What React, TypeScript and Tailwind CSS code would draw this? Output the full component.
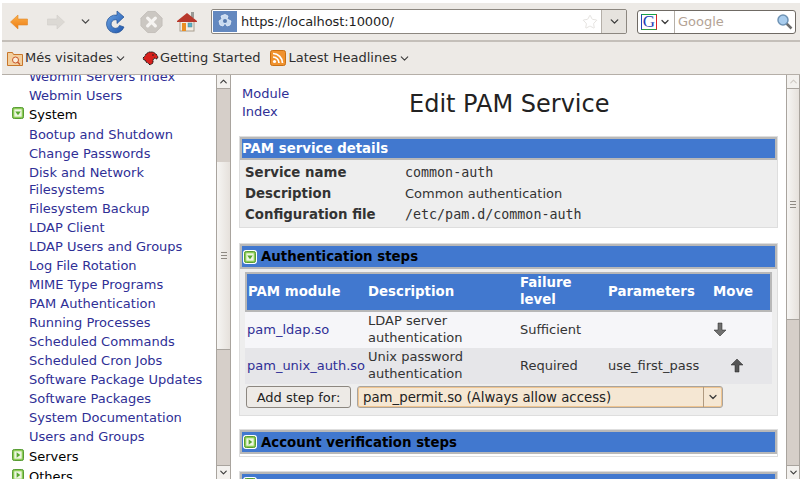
import { ChevronDown, ChevronUp, Star } from "lucide-react";

const systemLinks = [
  "Bootup and Shutdown",
  "Change Passwords",
  "Disk and Network Filesystems",
  "Filesystem Backup",
  "LDAP Client",
  "LDAP Users and Groups",
  "Log File Rotation",
  "MIME Type Programs",
  "PAM Authentication",
  "Running Processes",
  "Scheduled Commands",
  "Scheduled Cron Jobs",
  "Software Package Updates",
  "Software Packages",
  "System Documentation",
  "Users and Groups",
];

function GreenBox({ open, size = 12 }: { open?: boolean; size?: number }) {
  return (
    <svg width={size} height={size} viewBox="0 0 13 13" className="shrink-0">
      <rect x="0.5" y="0.5" width="12" height="12" rx="2" fill="#8ccb55" stroke="#4a9426" />
      <rect x="2.5" y="2.5" width="8" height="8" fill="#eef6e2" />
      {open ? <path d="M3.500 5h6l-3 4z" fill="#58a82e" /> : <path d="M5 3.500v6l4-3z" fill="#58a82e" />}
    </svg>
  );
}

function MenuHead({ label, open }: { label: string; open?: boolean }) {
  return (
    <div className="relative h-[20px] leading-[20px] text-black">
      <span className="absolute top-[2px] left-[-17px]">
        <GreenBox open={open} />
      </span>
      {label}
    </div>
  );
}

function Section({ title, open, headHeight, children }: { title: string; open?: boolean; headHeight: string; children?: React.ReactNode }) {
  return (
    <div className="border border-[#dedede]">
      <div className={`flex items-center gap-[4px] border-2 border-[#b8b8b8] bg-[#4178cf] pl-px ${headHeight}`}>
        <span className="flex rounded-[3px] bg-white p-px">
          <GreenBox open={open} size={12} />
        </span>
        <span className="pt-px text-[13.33px] font-bold text-black">{title}</span>
      </div>
      {children}
    </div>
  );
}

function ThumbGrip() {
  return (
    <div className="flex h-full flex-col items-center justify-center gap-[2px]">
      <span className="h-px w-[6px] bg-[#8f8a84]" />
      <span className="h-px w-[6px] bg-[#8f8a84]" />
      <span className="h-px w-[6px] bg-[#8f8a84]" />
    </div>
  );
}

function Scrollbar({ thumbTop, thumbHeight, width, upDisabled }: { thumbTop: number; thumbHeight: number; width: string; upDisabled?: boolean }) {
  return (
    <div className={`flex shrink-0 flex-col border-x border-[#a9a49e] bg-[#d6cfc9] ${width}`}>
      <div className="flex h-[14px] items-center justify-center border-b border-[#a9a49e] bg-[#f3f1ee]">
        <ChevronUp size={11} strokeWidth={2.5} className={upDisabled ? "text-[#cfcac4]" : "text-[#3c3c3c]"} />
      </div>
      <div className="min-h-0 flex-1">
        <div style={{ height: thumbTop }} />
        <div style={{ height: thumbHeight }} className="border-b border-[#a9a49e] bg-gradient-to-r from-[#f6f5f3] to-[#e6e1dc]">
          <ThumbGrip />
        </div>
      </div>
      <div className="flex h-[14px] items-center justify-center border-t border-[#a9a49e] bg-[#f3f1ee]">
        <ChevronDown size={11} strokeWidth={2.5} className="text-[#3c3c3c]" />
      </div>
    </div>
  );
}

const rowGrid = "grid h-[36px] grid-cols-[121px_152px_88px_105px_1fr] items-center pb-[2px] pl-[2px] leading-[17px]";

export default function App() {
  return (
    <div className="h-[479px] w-[802px] overflow-hidden bg-white pt-[3px] pr-[2px] pl-[2px] font-['DejaVu_Sans',sans-serif] text-[13px] text-[#333333]">
      {/* browser toolbar */}
      <div className="flex h-[39px] items-center border-b-2 border-[#c4bfb9] bg-[#edeae6] pl-[8px]">
        <svg width="18" height="16" viewBox="0 0 18 16">
          <defs>
            <linearGradient id="backFill" x1="0" y1="0" x2="0" y2="1">
              <stop offset="0" stopColor="#fbb04a" />
              <stop offset="1" stopColor="#ee7d14" />
            </linearGradient>
          </defs>
          <path d="M0.500 8 8 1v4h9.500v6H8v4z" fill="url(#backFill)" stroke="#e08a2c" strokeWidth="0.600" />
        </svg>
        <svg width="18" height="16" viewBox="0 0 18 16" className="ml-[19px]">
          <path d="M17.500 8 10 1v4H0.500v6H10v4z" fill="#dcd9d4" stroke="#d2cec9" strokeWidth="0.600" />
        </svg>
        <ChevronDown size={13} strokeWidth={2.5} className="ml-[14px] text-[#4a4a4a]" />
        <svg width="20" height="24" viewBox="0 0 20 24" className="ml-[13px]">
          <defs>
            <linearGradient id="reloadFill" x1="0" y1="0" x2="1" y2="1">
              <stop offset="0" stopColor="#6fa6e4" />
              <stop offset="1" stopColor="#1f57ae" />
            </linearGradient>
          </defs>
          <path d="M12 1v4.100A9 9 0 1 0 19 17l-4.500-1.600A4.300 4.300 0 1 1 12 10v3.500L19 7z" fill="url(#reloadFill)" stroke="#1f4f94" strokeWidth="0.700" />
        </svg>
        <svg width="23" height="24" viewBox="0 0 24 24" className="ml-[15px]">
          <path d="M8 1h8l7 7v8l-7 7H8l-7-7V8z" fill="#cbc7c2" stroke="#c3bfba" strokeLinejoin="round" />
          <path d="m8 8 8 8M16 8l-8 8" stroke="#f6f4f2" strokeWidth="3.400" strokeLinecap="round" />
        </svg>
        <svg width="20" height="21" viewBox="0 0 20 21" className="ml-[14px]">
          <rect x="14" y="1" width="3" height="6" fill="#9a9a96" />
          <rect x="3" y="9" width="14" height="11" fill="#f3eee4" stroke="#a89e90" />
          <path d="M0 10 10 2l10 8v1H0z" fill="#b8382b" />
          <rect x="5" y="12" width="4" height="8" fill="#ea8f24" />
          <rect x="11" y="12" width="4" height="4" fill="#55b3c9" stroke="#5d7f8a" strokeWidth="0.500" />
        </svg>
        <div className="ml-[14px] flex h-[25px] w-[416px] items-stretch rounded-[2px] border border-[#8c8780] bg-white">
          <div className="my-px ml-px flex w-[24px] items-center justify-center bg-[#6388bf]">
            <svg width="16" height="17" viewBox="0 0 16 17">
              <path d="M8 1.500 11 3l-1 3 4 2-1 4-3 1-2-3-2 3-3-1-1-4 3-2-1-3z" fill="#c9dbf0" stroke="#e8f0f9" strokeWidth="0.800" />
              <circle cx="8" cy="8" r="2" fill="#5679ad" />
            </svg>
          </div>
          <span className="ml-[4px] self-center text-[13px] tracking-[-0.1px] text-[#1f1f1f]">https://localhost:10000/</span>
          <Star size={16} strokeWidth={1} className="mr-[3px] ml-auto self-center text-[#d8d5d0]" />
          <div className="flex w-[25px] items-center justify-center rounded-r-[2px] border-l border-[#b5b0a9] bg-[#e6e3de]">
            <ChevronDown size={13} strokeWidth={2.5} className="text-[#3c3c3c]" />
          </div>
        </div>
        <div className="ml-[10px] flex h-[24px] w-[159px] items-center rounded-[3px] border border-[#6f6a64] bg-white">
          <span className="ml-[3px] flex h-[16px] w-[16px] items-center justify-center border border-t-[#19a34a] border-r-[#d8232a] border-b-[#2f9b3f] border-l-[#2244b8] font-['Liberation_Serif',serif] text-[17px] leading-none text-[#1f3fb8]">
            G
          </span>
          <ChevronDown size={12} strokeWidth={2.5} className="ml-[2px] text-[#3c3c3c]" />
          <span className="ml-[3px] h-full border-l border-[#b5b0a9]" />
          <span className="ml-[3px] text-[13px] text-[#b3a395]">Google</span>
          <svg width="17" height="17" viewBox="0 0 17 17" className="mr-[2px] ml-auto">
            <path d="m10.500 10.500 5 5" stroke="#6e6e6e" strokeWidth="2.500" />
            <circle cx="7" cy="7" r="5" fill="#a9cdee" stroke="#6f93b5" strokeWidth="1.500" />
          </svg>
        </div>
      </div>

      {/* bookmarks */}
      <div className="flex h-[33px] items-center border-b border-[#b5afa8] bg-[#edeae6] pl-[5px] text-[13px] text-[#2e2e2e]">
        <svg width="16" height="16" viewBox="0 0 16 16">
          <path d="M0.500 15.500v-13h5l1 2h9v11z" fill="#f3cf9e" stroke="#c8762a" />
          <circle cx="8.500" cy="10" r="3" fill="#fbeedb" stroke="#c8562a" />
          <path d="m10.500 12 2.500 2.500" stroke="#c8562a" strokeWidth="1.200" />
        </svg>
        <span className="ml-[2px]">Més visitades</span>
        <ChevronDown size={13} strokeWidth={2} className="ml-[1px] text-[#3c3c3c]" />
        <svg width="17" height="15" viewBox="0 0 17 15" className="ml-[15px]">
          <path d="M1 7 3 5l1-2 3-2h4l3 2 2 3-1 2-3-1-1 2v3l-3 2-2-2-2-1-1-2H2z" fill="#d8201c" stroke="#1a1a1a" strokeWidth="1" strokeDasharray="1.500 0.500" />
          <circle cx="11" cy="4" r="0.800" fill="#1a1a1a" />
        </svg>
        <span className="ml-[1px]">Getting Started</span>
        <svg width="16" height="16" viewBox="0 0 16 16" className="ml-[10px]">
          <rect x="0.500" y="0.500" width="15" height="15" rx="2" fill="#f0922e" stroke="#c96f12" />
          <circle cx="4.500" cy="11.500" r="1.600" fill="#fff" />
          <path d="M3 7a6 6 0 0 1 6 6M3 3.500a9.500 9.500 0 0 1 9.500 9.500" fill="none" stroke="#fff" strokeWidth="1.700" />
        </svg>
        <span className="ml-[2px]">Latest Headlines</span>
        <ChevronDown size={13} strokeWidth={2} className="ml-[1px] text-[#3c3c3c]" />
      </div>

      <div className="flex h-[404px] overflow-hidden">
        {/* left menu */}
        <div className="h-full w-[214px] shrink-0 overflow-hidden">
          <div className="mt-[-8px] w-[208px] pl-[27px] leading-[17px] text-[#2f2f96]">
            <div className="py-px">Webmin Servers Index</div>
            <div className="py-px">Webmin Users</div>
            <MenuHead label="System" open />
            {systemLinks.map((link) => (
              <div key={link} className="py-px">
                {link}
              </div>
            ))}
            <div className="mt-px">
              <MenuHead label="Servers" />
              <MenuHead label="Others" />
            </div>
          </div>
        </div>
        <Scrollbar thumbTop={73} thumbHeight={188} width="w-[15px]" />

        {/* main page */}
        <div className="min-w-0 flex-1 overflow-hidden px-[8px]">
          <div className="flex h-[61px] items-start pt-[10px] pl-[3px]">
            <div className="w-[60px] leading-[18px] text-[#2f2f96]">
              Module
              <br />
              Index
            </div>
            <h1 className="ml-[107px] pt-[5px] text-[24px] leading-[28px] text-[#222]">Edit PAM Service</h1>
          </div>

          <div className="border border-[#dedede]">
            <div className="flex h-[23px] items-center border-2 border-[#b8b8b8] bg-[#4178cf] text-[13.33px] font-bold text-white">
              PAM service details
            </div>
            <div className="bg-[#eeeeee] py-[2px] pl-[5px] leading-[21px]">
              <div className="flex">
                <b className="w-[160px] text-[13.33px]">Service name</b>
                <span className="font-['DejaVu_Sans_Mono',monospace] text-[13.33px]">common-auth</span>
              </div>
              <div className="flex">
                <b className="w-[160px] text-[13.33px]">Description</b>
                <span>Common authentication</span>
              </div>
              <div className="flex">
                <b className="w-[160px] text-[13.33px]">Configuration file</b>
                <span className="font-['DejaVu_Sans_Mono',monospace] text-[13.33px]">/etc/pam.d/common-auth</span>
              </div>
            </div>
          </div>

          <div className="mt-[15px]">
            <Section title="Authentication steps" open headHeight="h-[25px]">
              <div className="bg-[#eeeeee] px-[5px] pt-[3px] pb-[7px]">
                <div className="border-2 border-[#b8b8b8]">
                  <div className="grid h-[36px] grid-cols-[120px_152px_88px_105px_1fr] items-center bg-[#4178cf] pb-[2px] pl-[1px] text-[13.33px] leading-[17px] font-bold text-white">
                    <span>PAM module</span>
                    <span>Description</span>
                    <span>
                      Failure
                      <br />
                      level
                    </span>
                    <span>Parameters</span>
                    <span>Move</span>
                  </div>
                </div>
                <div className={`${rowGrid} bg-[#f6f6f9]`}>
                  <span className="text-[#2f2f96]">pam_ldap.so</span>
                  <span>
                    LDAP server
                    <br />
                    authentication
                  </span>
                  <span>Sufficient</span>
                  <span />
                  <svg width="14" height="15" viewBox="0 0 14 15">
                    <path d="M5 1h4v7h4l-6 6-6-6h4z" fill="#707070" stroke="#222" strokeWidth="0.500" />
                  </svg>
                </div>
                <div className={`${rowGrid} bg-[#e6e6e9]`}>
                  <span className="text-[#2f2f96]">pam_unix_auth.so</span>
                  <span>
                    Unix password
                    <br />
                    authentication
                  </span>
                  <span>Required</span>
                  <span>use_first_pass</span>
                  <svg width="14" height="15" viewBox="0 0 14 15" className="ml-[17px]">
                    <path d="M5 14h4V7h4L7 1 1 7h4z" fill="#555" stroke="#222" strokeWidth="0.500" />
                  </svg>
                </div>
                <div className="mt-[2px] flex items-center pl-px">
                  <button className="h-[22px] w-[105px] rounded-[3px] border border-[#8c8780] bg-[#edeae6] pt-px text-[13px] text-[#222]">
                    Add step for:
                  </button>
                  <div className="ml-[6px] flex h-[22px] w-[366px] items-center rounded-[3px] border border-[#a9a49e] bg-[#f5e7d3] pl-[5px] text-[13.3px] text-[#222] shadow-[inset_0_0_0_1px_#efc48f]">
                    <span className="pt-px">pam_permit.so (Always allow access)</span>
                    <span className="ml-auto flex h-full w-[19px] items-center justify-center border-l border-[#b09a80]">
                      <ChevronDown size={12} strokeWidth={2.5} className="text-[#3c3c3c]" />
                    </span>
                  </div>
                </div>
              </div>
            </Section>
          </div>

          <div className="mt-[13px]">
            <Section title="Account verification steps" headHeight="h-[24px]">
              <div className="h-[2px]" />
            </Section>
          </div>
          <div className="mt-[14px]">
            <Section title="" headHeight="h-[24px]" />
          </div>
        </div>
        <Scrollbar thumbTop={0} thumbHeight={231} width="w-[14px]" upDisabled />
      </div>
    </div>
  );
}
